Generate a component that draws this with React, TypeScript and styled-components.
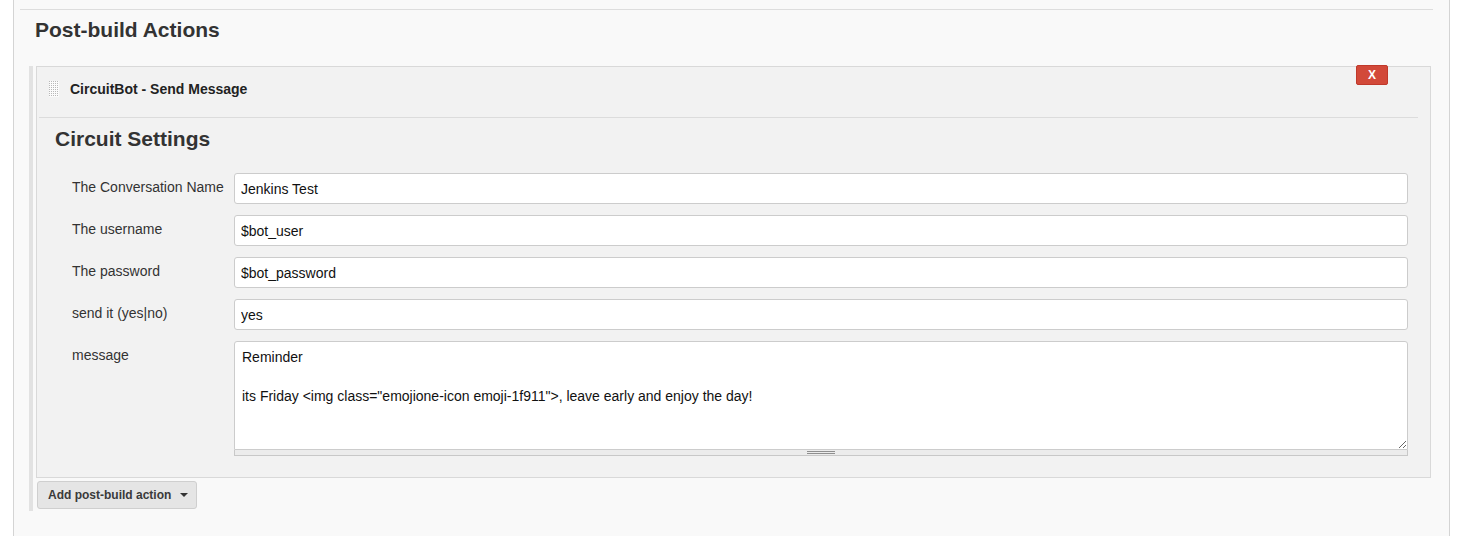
import React from "react";
import styled, { createGlobalStyle } from "styled-components";

const Global = createGlobalStyle`
  html, body { margin: 0; padding: 0; background: #ffffff; }
  body { font-family: "Liberation Sans", Arial, sans-serif; color: #333; }
  * { box-sizing: border-box; }
`;

const Page = styled.div`
  margin-left: 13px;
  width: 1437px;
  height: 536px;
  background: #f9f9f9;
  border-left: 1px solid #d4d4d4;
  border-right: 1px solid #d4d4d4;
  padding: 9px 16px 0 6px;
`;

const Section = styled.div`
  border-top: 1px solid #dddddd;
`;

const SectionTitle = styled.h2`
  margin: 0;
  padding: 9px 0 0 15px;
  height: 56px;
  font-size: 21px;
  font-weight: bold;
  color: #333;
  line-height: 22px;
`;

const Repeated = styled.div`
  margin-left: 9px;
  margin-right: 2px;
  border-left: 4px solid #e2e2e2;
  padding-left: 3px;
  padding-bottom: 2px;
`;

const Panel = styled.div`
  position: relative;
  background: #f2f2f2;
  border: 1px solid #d9d9d9;
  padding: 0 22px 21px 2px;
`;

const PanelHeader = styled.div`
  display: flex;
  align-items: center;
  gap: 11px;
  height: 51px;
  padding: 0 0 7px 10px;
  margin-right: -10px;
  border-bottom: 1px solid #dcdcdc;
  font-size: 14px;
  font-weight: bold;
  color: #222;
`;

const DeleteButton = styled.button`
  position: absolute;
  top: -2px;
  right: 42px;
  width: 32px;
  height: 20px;
  border: 1px solid #c0392b;
  border-radius: 2px;
  background: #d24939;
  color: #fff;
  font-family: "Liberation Sans", Arial, sans-serif;
  font-weight: bold;
  font-size: 12px;
  padding: 0;
  line-height: 18px;
`;

const SubTitle = styled.h3`
  margin: 0;
  padding: 10px 0 0 16px;
  height: 55px;
  font-size: 21px;
  font-weight: bold;
  color: #333;
  line-height: 22px;
`;

const Rows = styled.div`
  display: flex;
  flex-direction: column;
  gap: 11px;
`;

const Row = styled.div`
  display: grid;
  grid-template-columns: 195px 1fr;
  align-items: start;
`;

const Label = styled.div`
  padding-left: 33px;
  padding-top: 6px;
  font-size: 14px;
  color: #333;
  line-height: 16px;
`;

const TextInput = styled.input`
  width: 100%;
  height: 31px;
  border: 1px solid #cccccc;
  border-radius: 3px;
  background: #fff;
  padding: 0 6px;
  font-family: "Liberation Sans", Arial, sans-serif;
  font-size: 14px;
  color: #111;
  outline: none;
`;

const AreaWrap = styled.div`
  display: flex;
  flex-direction: column;
`;

const TextArea = styled.textarea`
  width: 100%;
  height: 109px;
  border: 1px solid #cccccc;
  border-radius: 3px 3px 0 0;
  background: #fff;
  padding: 6px 7px;
  font-family: "Liberation Sans", Arial, sans-serif;
  font-size: 14px;
  line-height: 19.5px;
  color: #111;
  resize: vertical;
  outline: none;
  display: block;
`;

const Handle = styled.div`
  height: 6px;
  background: #ececec;
  border: 1px solid #c8c8c8;
  border-top: none;
  display: flex;
  justify-content: center;
  align-items: center;
`;

const Grip = styled.div`
  width: 28px;
  height: 3px;
  border-top: 1px solid #8f8f8f;
  border-bottom: 1px solid #8f8f8f;
`;

const AddButton = styled.button`
  margin-top: 3px;
  margin-left: 1px;
  width: 160px;
  height: 28px;
  display: flex;
  align-items: center;
  gap: 9px;
  padding: 0 0 0 10px;
  border: 1px solid #cfcfcf;
  border-radius: 3px;
  background: #e5e5e5;
  color: #3a3a3a;
  font-family: "Liberation Sans", Arial, sans-serif;
  font-size: 12px;
  font-weight: bold;
`;

const DragHandle = () => (
  <svg width="10" height="16" viewBox="0 0 10 16" aria-hidden="true">
    <rect x="0" y="0" width="10" height="16" fill="#fbfbfb" />
    {Array.from({ length: 8 }).map((_, r) =>
      Array.from({ length: 5 }).map((__, c) => (
        <rect key={`${r}-${c}`} x={c * 2} y={r * 2} width="1" height="1" fill="#b8b8b8" />
      ))
    )}
  </svg>
);

const Caret = () => (
  <svg width="8" height="4" viewBox="0 0 8 4" aria-hidden="true">
    <path d="M0 0 H8 L4 4 Z" fill="#333" />
  </svg>
);

const fields = [
  { label: "The Conversation Name", value: "Jenkins Test" },
  { label: "The username", value: "$bot_user" },
  { label: "The password", value: "$bot_password" },
  { label: "send it (yes|no)", value: "yes" },
];

export default function App() {
  return (
    <>
      <Global />
      <Page>
        <Section>
          <SectionTitle>Post-build Actions</SectionTitle>
          <Repeated>
            <Panel>
              <PanelHeader>
                <DragHandle />
                <span>CircuitBot - Send Message</span>
              </PanelHeader>
              <DeleteButton>X</DeleteButton>
              <SubTitle>Circuit Settings</SubTitle>
              <Rows>
                {fields.map((f) => (
                  <Row key={f.label}>
                    <Label>{f.label}</Label>
                    <TextInput defaultValue={f.value} />
                  </Row>
                ))}
                <Row>
                  <Label>message</Label>
                  <AreaWrap>
                    <TextArea
                      defaultValue={
                        'Reminder\n\nits Friday <img class="emojione-icon emoji-1f911">, leave early and enjoy the day!'
                      }
                    />
                    <Handle>
                      <Grip />
                    </Handle>
                  </AreaWrap>
                </Row>
              </Rows>
            </Panel>
            <AddButton>
              <span>Add post-build action</span>
              <Caret />
            </AddButton>
          </Repeated>
        </Section>
      </Page>
    </>
  );
}
